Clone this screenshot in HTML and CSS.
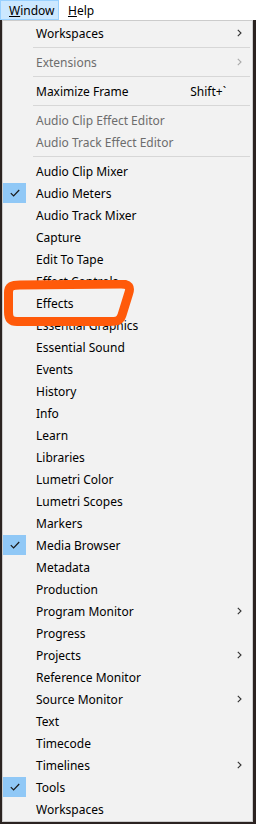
FILE: index.html
```html
<!DOCTYPE html>
<html>
<head>
<meta charset="utf-8">
<link rel="stylesheet" href="styles.css">
</head>
<body>
<div class="menubar">
  <span class="mb-item active"><u>W</u>indow</span>
  <span class="mb-item"><u>H</u>elp</span>
</div>
<div class="stage">
  <div class="menu">
    <div class="item"><span class="check"></span><span class="label">Workspaces</span><span class="key"></span><span class="arrow"><svg width="5" height="8" viewBox="0 0 5 8"><path d="M0.8 0.8 L4 4 L0.8 7.2" fill="none" stroke="#333" stroke-width="1.1"/></svg></span></div>
    <div class="sep"></div>
    <div class="item disabled"><span class="check"></span><span class="label">Extensions</span><span class="key"></span><span class="arrow"><svg width="5" height="8" viewBox="0 0 5 8"><path d="M0.8 0.8 L4 4 L0.8 7.2" fill="none" stroke="#aaa" stroke-width="1.1"/></svg></span></div>
    <div class="sep"></div>
    <div class="item"><span class="check"></span><span class="label">Maximize Frame</span><span class="key">Shift+`</span><span class="arrow"></span></div>
    <div class="sep"></div>
    <div class="item disabled"><span class="check"></span><span class="label">Audio Clip Effect Editor</span><span class="key"></span><span class="arrow"></span></div>
    <div class="item disabled"><span class="check"></span><span class="label">Audio Track Effect Editor</span><span class="key"></span><span class="arrow"></span></div>
    <div class="sep"></div>
    <div class="item"><span class="check"></span><span class="label">Audio Clip Mixer</span><span class="key"></span><span class="arrow"></span></div>
    <div class="item"><span class="check on"><svg width="10" height="8" viewBox="0 0 10 8"><path d="M0.8 4.2 L3.6 7 L9.2 1" fill="none" stroke="#1a1a1a" stroke-width="1.2"/></svg></span><span class="label">Audio Meters</span><span class="key"></span><span class="arrow"></span></div>
    <div class="item"><span class="check"></span><span class="label">Audio Track Mixer</span><span class="key"></span><span class="arrow"></span></div>
    <div class="item"><span class="check"></span><span class="label">Capture</span><span class="key"></span><span class="arrow"></span></div>
    <div class="item"><span class="check"></span><span class="label">Edit To Tape</span><span class="key"></span><span class="arrow"></span></div>
    <div class="item"><span class="check"></span><span class="label">Effect Controls</span><span class="key"></span><span class="arrow"></span></div>
    <div class="item"><span class="check"></span><span class="label">Effects</span><span class="key"></span><span class="arrow"></span></div>
    <div class="item"><span class="check"></span><span class="label">Essential Graphics</span><span class="key"></span><span class="arrow"></span></div>
    <div class="item"><span class="check"></span><span class="label">Essential Sound</span><span class="key"></span><span class="arrow"></span></div>
    <div class="item"><span class="check"></span><span class="label">Events</span><span class="key"></span><span class="arrow"></span></div>
    <div class="item"><span class="check"></span><span class="label">History</span><span class="key"></span><span class="arrow"></span></div>
    <div class="item"><span class="check"></span><span class="label">Info</span><span class="key"></span><span class="arrow"></span></div>
    <div class="item"><span class="check"></span><span class="label">Learn</span><span class="key"></span><span class="arrow"></span></div>
    <div class="item"><span class="check"></span><span class="label">Libraries</span><span class="key"></span><span class="arrow"></span></div>
    <div class="item"><span class="check"></span><span class="label">Lumetri Color</span><span class="key"></span><span class="arrow"></span></div>
    <div class="item"><span class="check"></span><span class="label">Lumetri Scopes</span><span class="key"></span><span class="arrow"></span></div>
    <div class="item"><span class="check"></span><span class="label">Markers</span><span class="key"></span><span class="arrow"></span></div>
    <div class="item"><span class="check on"><svg width="10" height="8" viewBox="0 0 10 8"><path d="M0.8 4.2 L3.6 7 L9.2 1" fill="none" stroke="#1a1a1a" stroke-width="1.2"/></svg></span><span class="label">Media Browser</span><span class="key"></span><span class="arrow"></span></div>
    <div class="item"><span class="check"></span><span class="label">Metadata</span><span class="key"></span><span class="arrow"></span></div>
    <div class="item"><span class="check"></span><span class="label">Production</span><span class="key"></span><span class="arrow"></span></div>
    <div class="item"><span class="check"></span><span class="label">Program Monitor</span><span class="key"></span><span class="arrow"><svg width="5" height="8" viewBox="0 0 5 8"><path d="M0.8 0.8 L4 4 L0.8 7.2" fill="none" stroke="#333" stroke-width="1.1"/></svg></span></div>
    <div class="item"><span class="check"></span><span class="label">Progress</span><span class="key"></span><span class="arrow"></span></div>
    <div class="item"><span class="check"></span><span class="label">Projects</span><span class="key"></span><span class="arrow"><svg width="5" height="8" viewBox="0 0 5 8"><path d="M0.8 0.8 L4 4 L0.8 7.2" fill="none" stroke="#333" stroke-width="1.1"/></svg></span></div>
    <div class="item"><span class="check"></span><span class="label">Reference Monitor</span><span class="key"></span><span class="arrow"></span></div>
    <div class="item"><span class="check"></span><span class="label">Source Monitor</span><span class="key"></span><span class="arrow"><svg width="5" height="8" viewBox="0 0 5 8"><path d="M0.8 0.8 L4 4 L0.8 7.2" fill="none" stroke="#333" stroke-width="1.1"/></svg></span></div>
    <div class="item"><span class="check"></span><span class="label">Text</span><span class="key"></span><span class="arrow"></span></div>
    <div class="item"><span class="check"></span><span class="label">Timecode</span><span class="key"></span><span class="arrow"></span></div>
    <div class="item"><span class="check"></span><span class="label">Timelines</span><span class="key"></span><span class="arrow"><svg width="5" height="8" viewBox="0 0 5 8"><path d="M0.8 0.8 L4 4 L0.8 7.2" fill="none" stroke="#333" stroke-width="1.1"/></svg></span></div>
    <div class="item"><span class="check on"><svg width="10" height="8" viewBox="0 0 10 8"><path d="M0.8 4.2 L3.6 7 L9.2 1" fill="none" stroke="#1a1a1a" stroke-width="1.2"/></svg></span><span class="label">Tools</span><span class="key"></span><span class="arrow"></span></div>
    <div class="item"><span class="check"></span><span class="label">Workspaces</span><span class="key"></span><span class="arrow"></span></div>
  </div>
  <svg class="annot" width="140" height="60" viewBox="0 0 140 60">
    <path d="M8.5 13 C8.5 6 12 5 20 5 L121 4 C129 4 131 7 128.5 14 L122 35 C120 41 117 41.5 110 41.5 L17 41.5 C11 41.5 8.5 39 8.5 32 Z" fill="none" stroke="#ff5a0a" stroke-width="9" stroke-linejoin="round"/>
  </svg>
</div>
</body>
</html>
```

FILE: styles.css
```css
html, body {
  margin: 0;
  padding: 0;
}
body {
  width: 256px;
  height: 824px;
  overflow: hidden;
  background: #2b2321;
  font-family: "Noto Sans", "Liberation Sans", sans-serif;
  font-size: 12px;
  color: #000;
}
.menubar {
  height: 20px;
  background: #ffffff;
  display: flex;
  align-items: stretch;
}
.mb-item {
  display: flex;
  align-items: center;
  padding: 0 7px 0 8px;
  border: 1px solid transparent;
  box-sizing: border-box;
}
.mb-item.active {
  width: 59px;
  background: #cce8ff;
  border-color: #99d1ff;
}
.stage {
  position: relative;
  padding-left: 2px;
  width: 251px;
}
.menu {
  background: #f2f2f2;
  border: 1px solid #cccccc;
  padding: 1px 0;
}
.item {
  height: 22px;
  display: grid;
  grid-template-columns: 23px 1fr auto 26px;
  align-items: center;
}
.check {
  height: 20px;
  display: flex;
  align-items: center;
  justify-content: center;
}
.check.on {
  background: #90c8f6;
}
.label {
  padding-left: 10px;
  white-space: nowrap;
}
.key {
  white-space: nowrap;
}
.arrow {
  display: flex;
  align-items: center;
  justify-content: center;
}
.disabled {
  color: #6d6d6d;
}
.sep {
  height: 1px;
  margin: 3px 2px 3px 30px;
  background: #d7d7d7;
}
.annot {
  position: absolute;
  left: 0;
  top: 260px;
}
```
